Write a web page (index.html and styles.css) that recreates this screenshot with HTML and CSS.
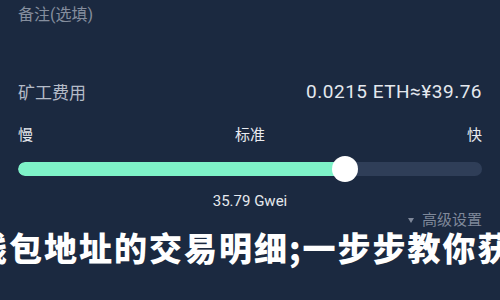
FILE: index.html
```html
<!DOCTYPE html>
<html lang="zh-CN">
<head>
<meta charset="utf-8">
<link rel="stylesheet" href="styles.css">
</head>
<body>
<div class="page">
  <div class="note">备注(选填)</div>
  <div class="fee-row">
    <span class="fee-label">矿工费用</span>
    <span class="fee-value">0.0215 ETH≈¥39.76</span>
  </div>
  <div class="speed-row">
    <span>慢</span>
    <span>标准</span>
    <span>快</span>
  </div>
  <div class="slider">
    <div class="track"><div class="fill" style="width:70.5%"></div></div>
    <div class="thumb" style="left:70.5%"></div>
  </div>
  <div class="gwei">35.79 Gwei</div>
  <div class="advanced"><span class="caret"></span>高级设置</div>
  <div class="title">钱包地址的交易明细;一步步教你获取</div>
</div>
</body>
</html>
```
FILE: styles.css
```css
html, body {
  margin: 0;
  padding: 0;
  background: #1b2940;
  overflow: hidden;
}
.page {
  width: 500px;
  height: 300px;
  padding: 0 18px;
  box-sizing: border-box;
  display: flex;
  flex-direction: column;
  font-family: Roboto, "Noto Sans CJK SC", sans-serif;
  position: relative;
  overflow: hidden;
}
.note {
  margin-top: 4px;
  font-size: 16px;
  line-height: 22px;
  color: #858e9e;
}
.fee-row {
  margin-top: 52px;
  display: flex;
  justify-content: space-between;
  align-items: center;
  height: 26px;
}
.fee-label {
  font-size: 17px;
  color: #b4bbc8;
}
.fee-value {
  font-size: 19px;
  letter-spacing: 0.5px;
  color: #e4e8ee;
}
.speed-row {
  margin-top: 21px;
  display: flex;
  justify-content: space-between;
  font-size: 15px;
  line-height: 20px;
  color: #e8ebf0;
}
.slider {
  position: relative;
  margin-top: 11px;
  height: 26px;
  display: flex;
  align-items: center;
}
.track {
  width: 100%;
  height: 14px;
  border-radius: 7px;
  background: #2f3e58;
  overflow: hidden;
}
.fill {
  height: 100%;
  background: #7ef2c8;
  border-radius: 7px 0 0 7px;
}
.thumb {
  position: absolute;
  top: 0;
  width: 26px;
  height: 26px;
  margin-left: -13px;
  border-radius: 50%;
  background: #ffffff;
}
.gwei {
  margin-top: 10px;
  text-align: center;
  font-size: 15px;
  line-height: 18px;
  color: #e6e9ee;
}
.advanced {
  align-self: flex-end;
  margin-top: 0;
  font-size: 15px;
  line-height: 20px;
  color: #7f889a;
  display: flex;
  align-items: center;
}
.caret {
  width: 0;
  height: 0;
  border-left: 3.5px solid transparent;
  border-right: 3.5px solid transparent;
  border-top: 5px solid #7f889a;
  margin-right: 8px;
}
.title {
  margin-left: -44px;
  margin-top: 0;
  white-space: nowrap;
  font-family: "Noto Sans CJK SC", sans-serif;
  font-weight: 900;
  font-size: 33px;
  letter-spacing: 2px;
  line-height: 34px;
  color: #ffffff;
}
```
